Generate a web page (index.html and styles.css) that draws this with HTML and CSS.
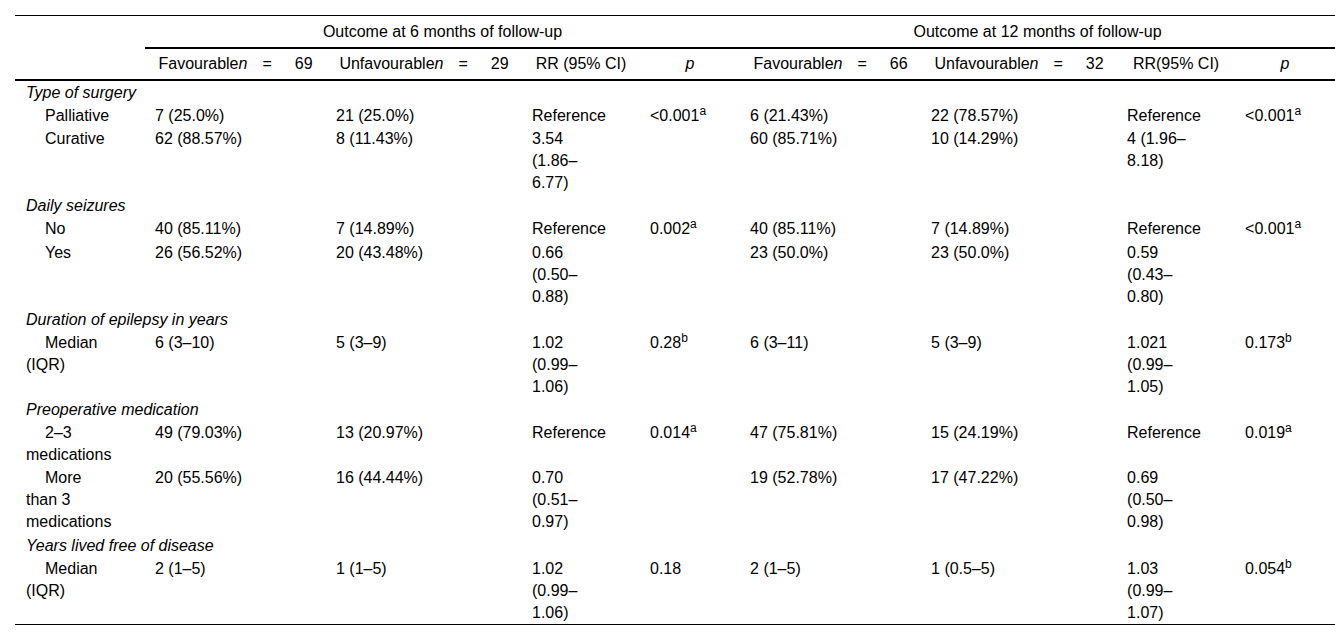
FILE: index.html
```html
<!DOCTYPE html>
<html lang="en">
<head>
<meta charset="utf-8">
<title>Outcome table</title>
<link rel="stylesheet" href="styles.css">
</head>
<body>
<div class="wrap">
<table class="tbl">
  <colgroup>
    <col class="c-label">
    <col class="c-n"><col class="c-u"><col class="c-rr"><col class="c-p">
    <col class="c-n"><col class="c-u"><col class="c-rr"><col class="c-p">
  </colgroup>
  <thead>
    <tr class="h1">
      <th rowspan="2" class="blank"></th>
      <th colspan="4" class="grp">Outcome at 6 months of follow-up</th>
      <th colspan="4" class="grp">Outcome at 12 months of follow-up</th>
    </tr>
    <tr class="h2">
      <th>Favourable<i>n</i><span class="eq">=</span>69</th>
      <th>Unfavourable<i>n</i><span class="eq">=</span>29</th>
      <th>RR (95% CI)</th>
      <th><i>p</i></th>
      <th>Favourable<i>n</i><span class="eq">=</span>66</th>
      <th>Unfavourable<i>n</i><span class="eq">=</span>32</th>
      <th>RR(95% CI)</th>
      <th><i>p</i></th>
    </tr>
  </thead>
  <tbody>
    <tr class="group"><td colspan="9">Type of surgery</td></tr>
    <tr>
      <td class="sub">Palliative</td><td>7 (25.0%)</td><td>21 (25.0%)</td><td>Reference</td><td>&lt;0.001<sup>a</sup></td>
      <td>6 (21.43%)</td><td>22 (78.57%)</td><td>Reference</td><td>&lt;0.001<sup>a</sup></td>
    </tr>
    <tr>
      <td class="sub">Curative</td><td>62 (88.57%)</td><td>8 (11.43%)</td><td>3.54 (1.86–6.77)</td><td></td>
      <td>60 (85.71%)</td><td>10 (14.29%)</td><td>4 (1.96–8.18)</td><td></td>
    </tr>
    <tr class="group"><td colspan="9">Daily seizures</td></tr>
    <tr>
      <td class="sub">No</td><td>40 (85.11%)</td><td>7 (14.89%)</td><td>Reference</td><td>0.002<sup>a</sup></td>
      <td>40 (85.11%)</td><td>7 (14.89%)</td><td>Reference</td><td>&lt;0.001<sup>a</sup></td>
    </tr>
    <tr>
      <td class="sub">Yes</td><td>26 (56.52%)</td><td>20 (43.48%)</td><td>0.66 (0.50–0.88)</td><td></td>
      <td>23 (50.0%)</td><td>23 (50.0%)</td><td>0.59 (0.43–0.80)</td><td></td>
    </tr>
    <tr class="group"><td colspan="9">Duration of epilepsy in years</td></tr>
    <tr>
      <td class="sub">Median (IQR)</td><td>6 (3–10)</td><td>5 (3–9)</td><td>1.02 (0.99–1.06)</td><td>0.28<sup>b</sup></td>
      <td>6 (3–11)</td><td>5 (3–9)</td><td>1.021 (0.99–1.05)</td><td>0.173<sup>b</sup></td>
    </tr>
    <tr class="group"><td colspan="9">Preoperative medication</td></tr>
    <tr>
      <td class="sub">2–3 medications</td><td>49 (79.03%)</td><td>13 (20.97%)</td><td>Reference</td><td>0.014<sup>a</sup></td>
      <td>47 (75.81%)</td><td>15 (24.19%)</td><td>Reference</td><td>0.019<sup>a</sup></td>
    </tr>
    <tr>
      <td class="sub">More than 3 medications</td><td>20 (55.56%)</td><td>16 (44.44%)</td><td>0.70 (0.51–0.97)</td><td></td>
      <td>19 (52.78%)</td><td>17 (47.22%)</td><td>0.69 (0.50–0.98)</td><td></td>
    </tr>
    <tr class="group"><td colspan="9">Years lived free of disease</td></tr>
    <tr class="last">
      <td class="sub">Median (IQR)</td><td>2 (1–5)</td><td>1 (1–5)</td><td>1.02 (0.99–1.06)</td><td>0.18</td>
      <td>2 (1–5)</td><td>1 (0.5–5)</td><td>1.03 (0.99–1.07)</td><td>0.054<sup>b</sup></td>
    </tr>
  </tbody>
</table>
</div>
</body>
</html>
```

FILE: styles.css
```css
* { box-sizing: border-box; }

html, body {
  margin: 0;
  padding: 0;
  background: #ffffff;
}

body {
  font-family: "Liberation Sans", Arial, sans-serif;
  font-size: 16px;
  color: #000000;
}

.wrap {
  padding: 15px 0 0 15px;
}

.tbl {
  width: 1320px;
  table-layout: fixed;
  border-collapse: collapse;
  line-height: 22px;
}

.c-label { width: 130px; }
.c-n { width: 181px; }
.c-u { width: 196px; }
.c-rr { width: 118px; }
.c-p { width: 100px; }

.tbl th {
  font-weight: normal;
  text-align: center;
  white-space: nowrap;
  padding: 0 10px;
}

.tbl thead tr.h1 th {
  border-top: 1px solid #000;
  padding-top: 5px;
  padding-bottom: 4px;
}

.tbl thead tr.h1 th.grp {
  border-bottom: 2px solid #000;
}

.tbl thead tr.h2 th {
  padding-top: 4px;
  padding-bottom: 4px;
  border-bottom: 2px solid #000;
}

.tbl thead th.blank {
  border-bottom: 2px solid #000;
}

.eq {
  margin: 0 23px 0 15px;
}

.tbl td {
  vertical-align: top;
  text-align: left;
  padding: 0.6px 10px;
}

.tbl td:nth-child(1) {
  padding-left: 11px;
  padding-right: 31px;
}

.tbl td:nth-child(4),
.tbl td:nth-child(8) {
  padding-right: 31px;
}

.tbl tr.group td {
  font-style: italic;
  padding-left: 11px;
  padding-right: 10px;
}

.tbl td.sub {
  text-indent: 19px;
}

.tbl tr.last td {
  border-bottom: 1px solid #000;
}

sup {
  font-size: 0.75em;
  line-height: 0;
  vertical-align: 0.5em;
}
```
